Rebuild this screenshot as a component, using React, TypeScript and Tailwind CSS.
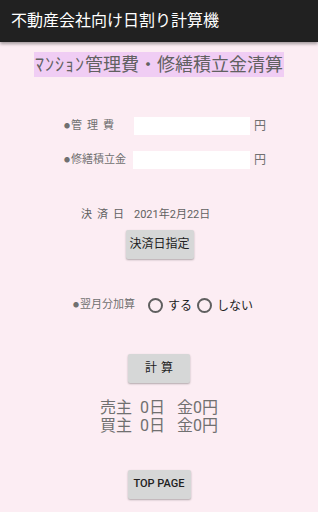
const font = { fontFamily: '"Roboto", "Noto Sans CJK JP", sans-serif' };

function Radio({ label }: { label: string }) {
  return (
    <div className="flex items-center gap-[5px]">
      <span className="w-[15px] h-[15px] rounded-full border-2 border-[#5f5f5f] bg-transparent" />
      <span className="text-[12px] text-[#212121]">{label}</span>
    </div>
  );
}

function GrayButton({ children, className }: { children: React.ReactNode; className?: string }) {
  return (
    <button
      className={
        "bg-[#d6d7d7] rounded-[2px] shadow-[0_1px_2px_rgba(0,0,0,0.3)] text-[#212121] flex items-center justify-center " +
        (className ?? "")
      }
    >
      {children}
    </button>
  );
}

function Bullet() {
  return <span className="text-[6px] mr-[1px] relative top-[-1px]">●</span>;
}

export default function App() {
  return (
    <div className="w-[318px] h-[512px] bg-[#fcedf3] flex flex-col overflow-hidden" style={font}>
      {/* Action bar */}
      <div className="h-[42px] bg-[#212121] flex items-center pl-[11px] shadow-[0_2px_3px_rgba(0,0,0,0.35)] shrink-0">
        <span className="text-white text-[16px]">不動産会社向け日割り計算機</span>
      </div>

      {/* Title */}
      <div className="flex justify-center mt-[10px]">
        <span className="bg-[#f0cdf4] text-[#616161] text-[18px] leading-[25px] px-[1px] whitespace-nowrap">
          <span className="tracking-[1px]">ﾏﾝｼｮﾝ</span>管理費・修繕積立金清算
        </span>
      </div>

      {/* Inputs */}
      <div className="flex flex-col gap-[16px] mt-[40px] pl-[64px]">
        <div className="flex items-center h-[18px]">
          <span className="w-[70px] text-[11px] text-[#707070] whitespace-nowrap flex items-center">
            <Bullet />
            <span className="tracking-[5px]">管理費</span>
          </span>
          <div className="w-[116px] h-[18px] bg-white" />
          <span className="ml-[4px] text-[12px] text-[#707070]">円</span>
        </div>
        <div className="flex items-center h-[18px]">
          <span className="w-[69px] text-[11px] text-[#707070] whitespace-nowrap flex items-center">
            <Bullet />
            修繕積立金
          </span>
          <div className="w-[117px] h-[18px] bg-white" />
          <span className="ml-[4px] text-[12px] text-[#707070]">円</span>
        </div>
      </div>

      {/* Settlement date */}
      <div className="flex items-center mt-[38px] pl-[81px] text-[11px] text-[#616161]">
        <span className="tracking-[5px]">決済日</span>
        <span className="ml-[5px]">2021年2月22日</span>
      </div>
      <div className="flex justify-center mt-[6px] pl-[1px]">
        <GrayButton className="w-[68px] h-[29px] text-[12px]">決済日指定</GrayButton>
      </div>

      {/* Next month */}
      <div className="flex items-center mt-[38px] pl-[73px] gap-[13px]">
        <span className="text-[11px] text-[#707070] flex items-center whitespace-nowrap">
          <Bullet />
          翌月分加算
        </span>
        <div className="flex items-center gap-[5px]">
          <Radio label="する" />
          <Radio label="しない" />
        </div>
      </div>

      {/* Calculate */}
      <div className="flex justify-center mt-[39px]">
        <GrayButton className="w-[62px] h-[29px] text-[12px] tracking-[4px] pl-[4px]">計算</GrayButton>
      </div>

      {/* Results */}
      <div className="flex flex-col items-center mt-[16px] text-[16px] leading-[18px] text-[#707070]">
        <span className="whitespace-nowrap">
          売主<span className="ml-[8px]">0日</span>
          <span className="ml-[12px]">金0円</span>
        </span>
        <span className="whitespace-nowrap">
          買主<span className="ml-[8px]">0日</span>
          <span className="ml-[12px]">金0円</span>
        </span>
      </div>

      {/* Top page */}
      <div className="flex justify-center mt-[35px]">
        <GrayButton className="w-[63px] h-[29px] text-[11px] font-medium">TOP PAGE</GrayButton>
      </div>
    </div>
  );
}
